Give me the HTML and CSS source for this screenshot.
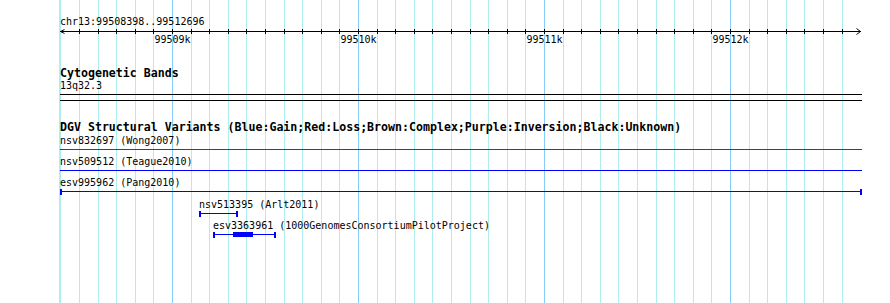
FILE: index.html
```html
<!DOCTYPE html>
<html lang="en">
<head>
    <meta charset="UTF-8">
    <meta name="viewport" content="width=device-width, initial-scale=1.0">
    <title>chr13:99508398..99512696</title>
    <link rel="stylesheet" href="styles.css">
</head>
<body>
    <div class="panel">
        <!-- background grid: minor line every 100bp, major every 1kb -->
        <svg class="grid" width="890" height="303">
            <rect x="59" y="0" width="2" height="303" fill="#afeeee"/>
            <path class="minor" d="M79.5 0V303M98.5 0V303M116.5 0V303M135.5 0V303M153.5 0V303M191.5 0V303M209.5 0V303M228.5 0V303M246.5 0V303M265.5 0V303M284.5 0V303M302.5 0V303M321.5 0V303M339.5 0V303M377.5 0V303M395.5 0V303M414.5 0V303M432.5 0V303M451.5 0V303M470.5 0V303M488.5 0V303M507.5 0V303M525.5 0V303M563.5 0V303M581.5 0V303M600.5 0V303M618.5 0V303M637.5 0V303M656.5 0V303M674.5 0V303M693.5 0V303M711.5 0V303M749.5 0V303M767.5 0V303M786.5 0V303M804.5 0V303M823.5 0V303M842.5 0V303"/>
            <path class="major" d="M172.5 0V303M358.5 0V303M544.5 0V303M730.5 0V303"/>
        </svg>

        <div class="tracks">
            <div class="ruler">
                <div class="label">chr13:99508398..99512696</div>
                <svg class="axis" width="802" height="18">
                    <path class="axis-line" d="M0 3.5H801"/>
                    <path class="axis-line" d="M4.5 1.5L0.5 3.5L4.5 5.5"/>
                    <path class="axis-line" d="M796.5 0.5L800.5 3.5L796.5 6.5"/>
                    <path class="ticks" d="M19.5 1V6M38.5 1V6M56.5 1V6M75.5 1V6M93.5 1V6M112.5 1V6M131.5 1V6M149.5 1V6M168.5 1V6M186.5 1V6M205.5 1V6M224.5 1V6M242.5 1V6M261.5 1V6M279.5 1V6M298.5 1V6M317.5 1V6M335.5 1V6M354.5 1V6M372.5 1V6M391.5 1V6M410.5 1V6M428.5 1V6M447.5 1V6M465.5 1V6M484.5 1V6M503.5 1V6M521.5 1V6M540.5 1V6M558.5 1V6M577.5 1V6M596.5 1V6M614.5 1V6M633.5 1V6M651.5 1V6M670.5 1V6M689.5 1V6M707.5 1V6M726.5 1V6M744.5 1V6M763.5 1V6M782.5 1V6"/>
                    <text x="112.5" y="15">99509k</text>
                    <text x="298.5" y="15">99510k</text>
                    <text x="484.5" y="15">99511k</text>
                    <text x="670.5" y="15">99512k</text>
                </svg>
            </div>

            <div class="track cyto">
                <div class="track-title">Cytogenetic Bands</div>
                <div class="label band-name">13q32.3</div>
                <div class="band"></div>
            </div>

            <div class="track dgv">
                <div class="track-title">DGV Structural Variants (Blue:Gain;Red:Loss;Brown:Complex;Purple:Inversion;Black:Unknown)</div>

                <div class="feature">
                    <div class="label">nsv832697 (Wong2007)</div>
                    <div class="bar loss"><span class="line"></span></div>
                </div>
                <div class="feature">
                    <div class="label">nsv509512 (Teague2010)</div>
                    <div class="bar gain"><span class="line"></span></div>
                </div>
                <div class="feature">
                    <div class="label">esv995962 (Pang2010)</div>
                    <div class="bar gain"><span class="cap"></span><span class="line"></span><span class="cap"></span></div>
                </div>
                <div class="feature bumped" style="margin-left: 139px; width: 39px;">
                    <div class="label">nsv513395 (Arlt2011)</div>
                    <div class="bar gain"><span class="cap"></span><span class="line"></span><span class="cap"></span></div>
                </div>
                <div class="feature" style="margin-left: 153px; width: 63px;">
                    <div class="label">esv3363961 (1000GenomesConsortiumPilotProject)</div>
                    <div class="bar gain">
                        <span class="cap"></span>
                        <span class="line" style="flex: 0 0 18px;"></span>
                        <span class="block" style="width: 20px;"></span>
                        <span class="line"></span>
                        <span class="cap"></span>
                    </div>
                </div>
            </div>
        </div>
    </div>
</body>
</html>
```

FILE: styles.css
```css
* {
    margin: 0;
    padding: 0;
    box-sizing: border-box;
}
body {
    background: #ffffff;
    font-family: "DejaVu Sans Mono", "Liberation Mono", monospace;
    color: #000;
}
.panel {
    position: relative;
    width: 890px;
    height: 303px;
    overflow: hidden;
}
.grid {
    position: absolute;
    left: 0;
    top: 0;
}
.grid .minor {
    stroke: #afeeee;
    stroke-width: 1;
    shape-rendering: crispEdges;
}
.grid .major {
    stroke: #87cefa;
    stroke-width: 1;
    shape-rendering: crispEdges;
}
.tracks {
    position: relative;
    width: 862px;
    padding-left: 60px;
}
.label {
    font-size: 10px;
    line-height: 11px;
    white-space: nowrap;
    color: #000;
}
.track-title {
    font-size: 11.6px;
    font-weight: bold;
    line-height: 11px;
    white-space: nowrap;
}

/* ruler */
.ruler {
    padding-top: 16px;
}
.axis {
    display: block;
    margin-top: 1px;
    overflow: visible;
}
.axis-line {
    fill: none;
    stroke: #000;
    stroke-width: 1;
}
.ticks {
    stroke: #000;
    stroke-width: 1;
    shape-rendering: crispEdges;
}
.axis text {
    font-family: "DejaVu Sans Mono", "Liberation Mono", monospace;
    font-size: 10px;
    text-anchor: middle;
    fill: #000;
}

/* cytogenetic bands */
.cyto {
    margin-top: 22px;
}
.band-name {
    margin-top: 1px;
}
.band {
    height: 7px;
    margin-top: 3px;
    border-top: 1px solid #000;
    border-bottom: 1px solid #000;
}

/* structural variants */
.dgv {
    margin-top: 21px;
}
.feature {
    margin-top: 3px;
}
.dgv .track-title + .feature {
    margin-top: 2px;
}
.feature.bumped {
    margin-top: 4px;
}
.bar {
    display: flex;
    height: 6px;
    margin-top: 1px;
}
.bar.gain {
    color: #0000ff;
}
.bar.loss {
    color: #e00000;
}
.bar .line {
    flex: 1;
    height: 1px;
    margin-top: 2px;
    background: currentColor;
}
.bar .cap {
    width: 2px;
    background: currentColor;
}
.bar .block {
    height: 5px;
    background: currentColor;
}
```
